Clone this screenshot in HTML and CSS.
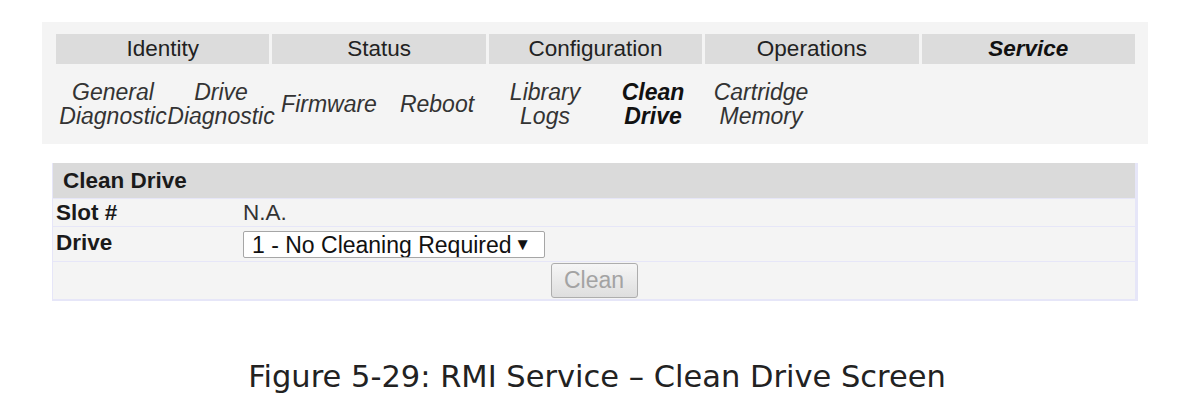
FILE: index.html
```html
<!DOCTYPE html>
<html lang="en">
<head>
  <meta charset="UTF-8">
  <title>RMI Service - Clean Drive</title>
  <link rel="stylesheet" href="styles.css">
</head>
<body>
  <div class="page">
    <div class="nav">
      <div class="tabs">
        <div class="tab">Identity</div>
        <div class="tab">Status</div>
        <div class="tab">Configuration</div>
        <div class="tab">Operations</div>
        <div class="tab active">Service</div>
      </div>
      <div class="subnav">
        <a href="#">General<br>Diagnostic</a>
        <a href="#">Drive<br>Diagnostic</a>
        <a href="#">Firmware</a>
        <a href="#">Reboot</a>
        <a href="#">Library<br>Logs</a>
        <a href="#" class="current">Clean<br>Drive</a>
        <a href="#">Cartridge<br>Memory</a>
      </div>
    </div>

    <div class="box">
      <div class="box-head">Clean Drive</div>
      <div class="row row-slot">
        <div class="label">Slot #</div>
        <div class="value">N.A.</div>
      </div>
      <div class="row row-drive">
        <div class="label">Drive</div>
        <div class="value">
          <span class="select-wrap">
            <select id="drive-select">
              <option>1 - No Cleaning Required</option>
            </select>
            <span class="arrow">&#9660;</span>
          </span>
        </div>
      </div>
      <div class="row row-btn">
        <button id="clean-btn" disabled>Clean</button>
      </div>
    </div>

    <p class="caption">Figure 5-29: RMI Service &ndash; Clean Drive Screen</p>
  </div>
</body>
</html>
```

FILE: styles.css
```css
body {
  margin: 0;
  font-family: "Liberation Sans", Arial, sans-serif;
  background: #fff;
  color: #1e1e1e;
}
.page {
  padding: 22px 0 0 42px;
}
.nav {
  width: 1106px;
  box-sizing: border-box;
  background: #f4f4f4;
  padding: 12px 13px 16px 14px;
}
.tabs {
  display: grid;
  grid-template-columns: repeat(5, 1fr);
  gap: 3px;
}
.tab {
  background: #dcdcdc;
  height: 30px;
  line-height: 30px;
  text-align: center;
  font-size: 22.5px;
  color: #222;
}
.tab.active {
  font-weight: bold;
  font-style: italic;
  color: #111;
}
.subnav {
  display: flex;
  align-items: center;
  height: 48px;
  margin: 16px 0 0 3px;
}
.subnav a {
  width: 108px;
  text-align: center;
  font-size: 23px;
  line-height: 24px;
  font-style: italic;
  color: #333;
  text-decoration: none;
  white-space: nowrap;
}
.subnav a.current {
  font-weight: bold;
  color: #111;
}
.box {
  width: 1086px;
  box-sizing: border-box;
  margin: 19px 0 0 10px;
  background: #e6e6f8;
  padding: 0 3px 2px 1px;
  display: flex;
  flex-direction: column;
  gap: 1px;
}
.box-head {
  background: #dadada;
  height: 35px;
  line-height: 35px;
  padding-left: 10px;
  font-size: 22.5px;
  font-weight: bold;
  color: #1a1a1a;
}
.row {
  display: flex;
  background: #f4f4f4;
  font-size: 22.5px;
}
.label {
  width: 187px;
  padding-left: 3px;
  font-weight: bold;
  color: #1a1a1a;
}
.value {
  color: #333;
}
.row-slot {
  height: 27px;
  line-height: 27px;
}
.row-drive {
  height: 34px;
  padding-top: 4px;
  box-sizing: border-box;
}
.row-drive .label {
  line-height: 24px;
}
.select-wrap {
  position: relative;
  display: inline-block;
}
#drive-select {
  appearance: none;
  -webkit-appearance: none;
  width: 302px;
  height: 27px;
  margin: 0;
  padding: 0 0 0 8px;
  font-family: "Liberation Sans", Arial, sans-serif;
  font-size: 23px;
  color: #111;
  background: #fff;
  border: 1px solid #a6a6a6;
  border-radius: 2px;
  display: block;
}
.arrow {
  position: absolute;
  right: 14px;
  top: 5px;
  font-size: 17px;
  line-height: 17px;
  color: #111;
  pointer-events: none;
}
.row-btn {
  height: 37px;
  justify-content: center;
  align-items: center;
}
#clean-btn {
  width: 87px;
  height: 35px;
  font-family: "Liberation Sans", Arial, sans-serif;
  font-size: 23px;
  color: #a3a3a3;
  background: linear-gradient(#f6f6f6, #dedede);
  border: 1px solid #adadad;
  border-radius: 3px;
  padding: 0;
}
.caption {
  width: 1090px;
  margin: 58px 0 0 10px;
  text-align: center;
  font-family: "DejaVu Sans", sans-serif;
  font-size: 30.5px;
  color: #222;
}
```
